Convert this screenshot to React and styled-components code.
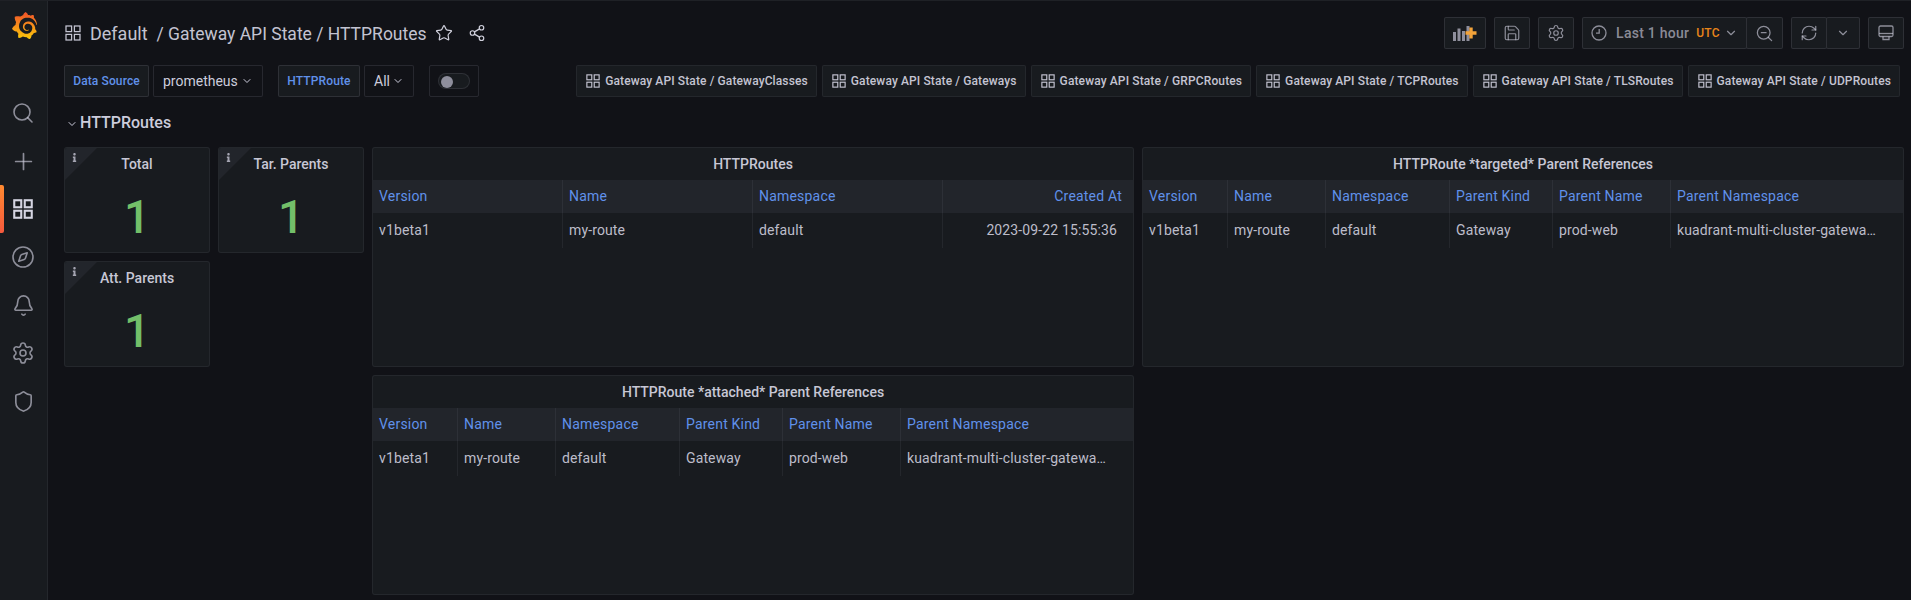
import React from "react";
import styled, { createGlobalStyle } from "styled-components";
import {
  Search,
  Plus,
  Compass,
  Bell,
  Settings,
  Shield,
  Star,
  Share2,
  Save,
  ZoomOut,
  RefreshCw,
  ChevronDown,
} from "lucide-react";
import { FaInfo } from "react-icons/fa";
import { SiGrafana } from "react-icons/si";

const GlobalStyle = createGlobalStyle`
  html, body {
    margin: 0;
    padding: 0;
    height: 600px;
    overflow: hidden;
    background: #111217;
    color: #ccccdc;
    font-family: Roboto, "Liberation Sans", sans-serif;
    font-size: 14px;
  }
  * {
    box-sizing: border-box;
  }
`;

const border = "rgba(204, 204, 220, 0.12)";
const weakBorder = "rgba(204, 204, 220, 0.07)";
const muted = "rgba(204, 204, 220, 0.65)";
const link = "#6091ea";

const Page = styled.div`
  display: flex;
  height: 600px;
  border-top: 1px solid #1f2126;
`;

const Sidebar = styled.nav`
  width: 48px;
  flex: none;
  background: #181b1f;
  border-right: 1px solid ${weakBorder};
  display: flex;
  flex-direction: column;
`;

const LogoSlot = styled.div`
  height: 88px;
  padding-top: 11px;
  padding-left: 11px;
`;

const NavItem = styled.div`
  position: relative;
  height: 48px;
  display: flex;
  align-items: center;
  justify-content: center;
  padding-right: 1px;
  color: ${(props) => (props.$active ? "#d5d5e2" : muted)};

  ${(props) =>
    props.$active &&
    `
    &::before {
      content: "";
      position: absolute;
      left: 0;
      top: 0;
      bottom: 0;
      width: 4px;
      border-radius: 0 2px 2px 0;
      background: linear-gradient(#ff8a30, #f5593d);
    }
  `}
`;

const Main = styled.main`
  flex: 1;
  min-width: 0;
  padding: 16px 7px 0 16px;
`;

const HeaderRow = styled.header`
  height: 32px;
  display: flex;
  align-items: center;
  justify-content: space-between;
  margin-bottom: 16px;
`;

const TitleArea = styled.div`
  display: flex;
  align-items: center;
  color: #c3c3d1;
  padding-left: 1px;
`;

const Title = styled.h1`
  margin: 0 0 0 9px;
  font-size: 18px;
  font-weight: 400;
  color: #c3c3d1;
  white-space: pre;
`;

const TitlePath = styled.span`
  font-size: 17.5px;
`;

const TitleIcon = styled.span`
  display: inline-flex;
  color: #d0d0dc;
  margin-left: ${(props) => props.$left}px;
`;

const Actions = styled.div`
  display: flex;
  align-items: center;
  gap: 8px;
`;

const Joined = styled.div`
  display: flex;
`;

const ToolButton = styled.div`
  width: ${(props) => props.$w}px;
  height: 32px;
  display: flex;
  align-items: center;
  justify-content: center;
  background: #181b1f;
  border: 1px solid ${border};
  border-radius: 2px;
  color: ${muted};
  margin-left: ${(props) => (props.$joined ? "-1px" : "0")};
`;

const TimeText = styled.span`
  margin-left: 9px;
  font-weight: 500;
  letter-spacing: 0.25px;
`;

const Utc = styled.span`
  margin-left: 7px;
  margin-right: 4px;
  color: #e8851a;
  font-size: 12px;
  font-weight: 500;
  letter-spacing: 0.3px;
`;

const VarRow = styled.div`
  height: 32px;
  display: flex;
  align-items: center;
  justify-content: space-between;
  padding-right: 4px;
`;

const VarGroup = styled.div`
  display: flex;
  align-items: center;
`;

const VarLabel = styled.label`
  width: ${(props) => props.$w}px;
  height: 32px;
  display: flex;
  align-items: center;
  justify-content: center;
  background: #181b1f;
  border: 1px solid ${border};
  border-radius: 2px;
  color: ${link};
  font-size: 12px;
  font-weight: 500;
  letter-spacing: 0.12px;
  margin-left: ${(props) => props.$left || 0}px;
`;

const VarSelect = styled.div`
  width: ${(props) => props.$w}px;
  height: 32px;
  display: flex;
  align-items: center;
  justify-content: space-between;
  padding: 0 9px;
  margin-left: 4px;
  background: #111217;
  border: 1px solid ${border};
  border-radius: 2px;
  color: #ccccdc;
`;

const ToggleBox = styled.div`
  width: 50px;
  height: 32px;
  margin-left: 15px;
  display: flex;
  align-items: center;
  justify-content: center;
  border: 1px solid ${border};
  border-radius: 2px;
`;

const Toggle = styled.div`
  width: 32px;
  height: 16px;
  border-radius: 8px;
  border: 1px solid ${border};
  background: #181b1f;
  padding: 2px;

  &::before {
    content: "";
    display: block;
    width: 12px;
    height: 12px;
    border-radius: 50%;
    background: #8e8e9c;
  }
`;

const LinkList = styled.div`
  display: flex;
  gap: 5px;
`;

const DashLink = styled.a`
  height: 32px;
  display: flex;
  align-items: center;
  gap: 5px;
  padding: 0 8px 0 9px;
  background: #181b1f;
  border: 1px solid ${weakBorder};
  border-radius: 2px;
  color: #c4c4d2;
  font-size: 12px;
  font-weight: 500;
  white-space: nowrap;
  letter-spacing: 0.12px;
`;

const SectionRow = styled.div`
  height: 50px;
  padding-top: 16px;
  display: flex;
  align-items: flex-start;
  gap: 2px;
  padding-left: 2px;
  font-size: 16px;
  font-weight: 500;
  line-height: 20px;
  color: #ccccdc;

  svg {
    margin-top: 5px;
  }
`;

const PanelGrid = styled.div`
  display: grid;
  grid-template-columns: repeat(24, 1fr);
  grid-auto-rows: 30px;
  gap: 8px;
`;

const Panel = styled.section`
  grid-column: ${(props) => props.$col} / span ${(props) => props.$w};
  grid-row: ${(props) => props.$row} / span ${(props) => props.$h};
  position: relative;
  min-width: 0;
  background: #181b1f;
  border: 1px solid ${weakBorder};
  border-radius: 3px;
  overflow: hidden;
`;

const PanelTitle = styled.h2`
  margin: 0;
  height: 32px;
  line-height: 32px;
  text-align: center;
  font-size: 14px;
  font-weight: 500;
  color: #c7c7d5;
`;

const InfoCorner = styled.div`
  position: absolute;
  top: 0;
  left: 0;
  width: 32px;
  height: 32px;
  background: #22252b;
  clip-path: polygon(0 0, 100% 0, 0 100%);
  color: #a5a5b2;

  svg {
    position: absolute;
    top: 5px;
    left: 5px;
  }
`;

const StatValue = styled.div`
  text-align: center;
  font-size: 46px;
  font-weight: 500;
  line-height: 54px;
  color: #73bf69;
  margin-top: 10px;
`;

const TableHead = styled.div`
  display: grid;
  grid-template-columns: ${(props) => props.$cols};
  height: 33px;
  background: #22252b;
`;

const TableBody = styled.div`
  display: grid;
  grid-template-columns: ${(props) => props.$cols};
  height: 35px;
`;

const HeadCell = styled.div`
  display: flex;
  align-items: center;
  justify-content: ${(props) => (props.$right ? "flex-end" : "flex-start")};
  padding: 0 ${(props) => (props.$right ? "11px" : "6px")} 1px 6px;
  color: ${link};
  font-weight: 400;
  letter-spacing: 0.2px;
  min-width: 0;
  border-right: ${(props) => (props.$last ? "none" : `1px solid ${weakBorder}`)};
`;

const Cell = styled.div`
  padding: 0 ${(props) => (props.$right ? "16px" : props.$last ? "24px" : "6px")} 0 6px;
  line-height: 35px;
  text-align: ${(props) => (props.$right ? "right" : "left")};
  color: #bdbdca;
  letter-spacing: 0.13px;
  white-space: nowrap;
  overflow: hidden;
  text-overflow: ellipsis;
  min-width: 0;
  border-right: ${(props) => (props.$last ? "none" : `1px solid ${weakBorder}`)};
`;

// grafana's "apps" glyph, four squares
const Apps = ({ size = 16, width = 2 }) => (
  <svg width={size} height={size} viewBox="0 0 16 16" fill="none" stroke="currentColor" strokeWidth={width * 0.7}>
    <rect x="1" y="1" width="5.6" height="5.6" />
    <rect x="9.4" y="1" width="5.6" height="5.6" />
    <rect x="1" y="9.4" width="5.6" height="5.6" />
    <rect x="9.4" y="9.4" width="5.6" height="5.6" />
  </svg>
);

const Logo = () => (
  <>
    <svg width="0" height="0" style={{ position: "absolute" }}>
      <linearGradient id="grafanaFill" x1="0" y1="0" x2="0" y2="1">
        <stop offset="0" stopColor="#f0512a" />
        <stop offset="1" stopColor="#fbca0a" />
      </linearGradient>
    </svg>
    <SiGrafana size={27} style={{ fill: "url(#grafanaFill)" }} />
  </>
);

const AddPanelIcon = () => (
  <svg width="24" height="16" viewBox="0 0 24 16">
    <g fill="#8f8f9c">
      <rect x="0" y="7" width="3" height="9" />
      <rect x="4.5" y="3.5" width="3" height="12.5" />
      <rect x="9" y="6" width="3" height="10" />
      <rect x="13.5" y="1" width="3" height="15" />
    </g>
    <path d="M19 2.5v11M13.5 8h11" stroke="#f2a33a" strokeWidth="3.4" transform="translate(-1 0)" />
  </svg>
);

const ClockIcon = () => (
  <svg width="16" height="16" viewBox="0 0 16 16" fill="none" stroke="currentColor" strokeWidth="1.3">
    <circle cx="8" cy="8" r="7" />
    <path d="M8.2 4v4.2H5" />
  </svg>
);

const MonitorIcon = () => (
  <svg width="16" height="16" viewBox="0 0 16 16" fill="none" stroke="currentColor" strokeWidth="1.3">
    <rect x="1" y="1" width="14" height="10.5" rx="1.5" />
    <path d="M1 8.5h14" />
    <path d="M5 11.5v3h6v-3" />
  </svg>
);

const dashLinks = ["GatewayClasses", "Gateways", "GRPCRoutes", "TCPRoutes", "TLSRoutes", "UDPRoutes"];

const parentCols = "85px 98px 124px 103px 118px 1fr";
const parentHead = ["Version", "Name", "Namespace", "Parent Kind", "Parent Name", "Parent Namespace"];
const parentRow = ["v1beta1", "my-route", "default", "Gateway", "prod-web", "kuadrant-multi-cluster-gateway-controller"];

const TablePanel = ({ title, cols, head, row, rightLast, ...rest }) => (
  <Panel $w={10} $h={6} {...rest}>
    <PanelTitle>{title}</PanelTitle>
    <TableHead $cols={cols}>
      {head.map((h, i) => (
        <HeadCell key={h} $last={i === head.length - 1} $right={rightLast && i === head.length - 1}>
          {h}
        </HeadCell>
      ))}
    </TableHead>
    <TableBody $cols={cols}>
      {row.map((c, i) => (
        <Cell key={c} $last={i === row.length - 1} $right={rightLast && i === row.length - 1}>
          {c}
        </Cell>
      ))}
    </TableBody>
  </Panel>
);

const StatPanel = ({ title, ...rest }) => (
  <Panel $w={2} $h={3} {...rest}>
    <InfoCorner>
      <FaInfo size={9} />
    </InfoCorner>
    <PanelTitle>{title}</PanelTitle>
    <StatValue>1</StatValue>
  </Panel>
);

export default function App() {
  return (
    <>
      <GlobalStyle />
      <Page>
        <Sidebar>
          <LogoSlot>
            <Logo />
          </LogoSlot>
          <NavItem>
            <Search size={24} strokeWidth={1.6} />
          </NavItem>
          <NavItem>
            <Plus size={27} strokeWidth={1.5} />
          </NavItem>
          <NavItem $active>
            <Apps size={20} width={2.4} />
          </NavItem>
          <NavItem>
            <Compass size={24} strokeWidth={1.6} />
          </NavItem>
          <NavItem>
            <Bell size={23} strokeWidth={1.7} />
          </NavItem>
          <NavItem>
            <Settings size={24} strokeWidth={1.6} />
          </NavItem>
          <NavItem>
            <Shield size={23} strokeWidth={1.7} />
          </NavItem>
        </Sidebar>
        <Main>
          <HeaderRow>
            <TitleArea>
              <Apps size={16} width={1.8} />
              <Title>
                Default  <TitlePath>/ Gateway API State / HTTPRoutes</TitlePath>
              </Title>
              <TitleIcon $left={8}>
                <Star size={18} strokeWidth={1.6} />
              </TitleIcon>
              <TitleIcon $left={15}>
                <Share2 size={18} strokeWidth={1.6} />
              </TitleIcon>
            </TitleArea>
            <Actions>
              <ToolButton $w={42}>
                <AddPanelIcon />
              </ToolButton>
              <ToolButton $w={36}>
                <Save size={18} strokeWidth={1.6} />
              </ToolButton>
              <ToolButton $w={36}>
                <Settings size={18} strokeWidth={1.6} />
              </ToolButton>
              <Joined>
                <ToolButton $w={165}>
                  <ClockIcon />
                  <TimeText>Last 1 hour</TimeText>
                  <Utc>UTC</Utc>
                  <ChevronDown size={14} />
                </ToolButton>
                <ToolButton $w={37} $joined>
                  <ZoomOut size={19} strokeWidth={1.6} />
                </ToolButton>
              </Joined>
              <Joined>
                <ToolButton $w={36}>
                  <RefreshCw size={18} strokeWidth={1.6} />
                </ToolButton>
                <ToolButton $w={34} $joined>
                  <ChevronDown size={14} />
                </ToolButton>
              </Joined>
              <ToolButton $w={36}>
                <MonitorIcon />
              </ToolButton>
            </Actions>
          </HeaderRow>
          <VarRow>
            <VarGroup>
              <VarLabel $w={85}>Data Source</VarLabel>
              <VarSelect $w={110}>
                prometheus
                <ChevronDown size={12} />
              </VarSelect>
              <VarLabel $w={82} $left={15}>
                HTTPRoute
              </VarLabel>
              <VarSelect $w={50}>
                All
                <ChevronDown size={12} />
              </VarSelect>
              <ToggleBox>
                <Toggle />
              </ToggleBox>
            </VarGroup>
            <LinkList>
              {dashLinks.map((name) => (
                <DashLink key={name}>
                  <Apps size={14} width={1.9} />
                  Gateway API State / {name}
                </DashLink>
              ))}
            </LinkList>
          </VarRow>
          <SectionRow>
            <ChevronDown size={12} strokeWidth={2} />
            HTTPRoutes
          </SectionRow>
          <PanelGrid>
            <StatPanel title="Total" $col={1} $row={1} />
            <StatPanel title="Tar. Parents" $col={3} $row={1} />
            <StatPanel title="Att. Parents" $col={1} $row={4} />
            <TablePanel
              title="HTTPRoutes"
              $col={5}
              $row={1}
              cols="repeat(4, 1fr)"
              head={["Version", "Name", "Namespace", "Created At"]}
              row={["v1beta1", "my-route", "default", "2023-09-22 15:55:36"]}
              rightLast
            />
            <TablePanel
              title="HTTPRoute *targeted* Parent References"
              $col={15}
              $row={1}
              cols={parentCols}
              head={parentHead}
              row={parentRow}
            />
            <TablePanel
              title="HTTPRoute *attached* Parent References"
              $col={5}
              $row={7}
              cols={parentCols}
              head={parentHead}
              row={parentRow}
            />
          </PanelGrid>
        </Main>
      </Page>
    </>
  );
}
